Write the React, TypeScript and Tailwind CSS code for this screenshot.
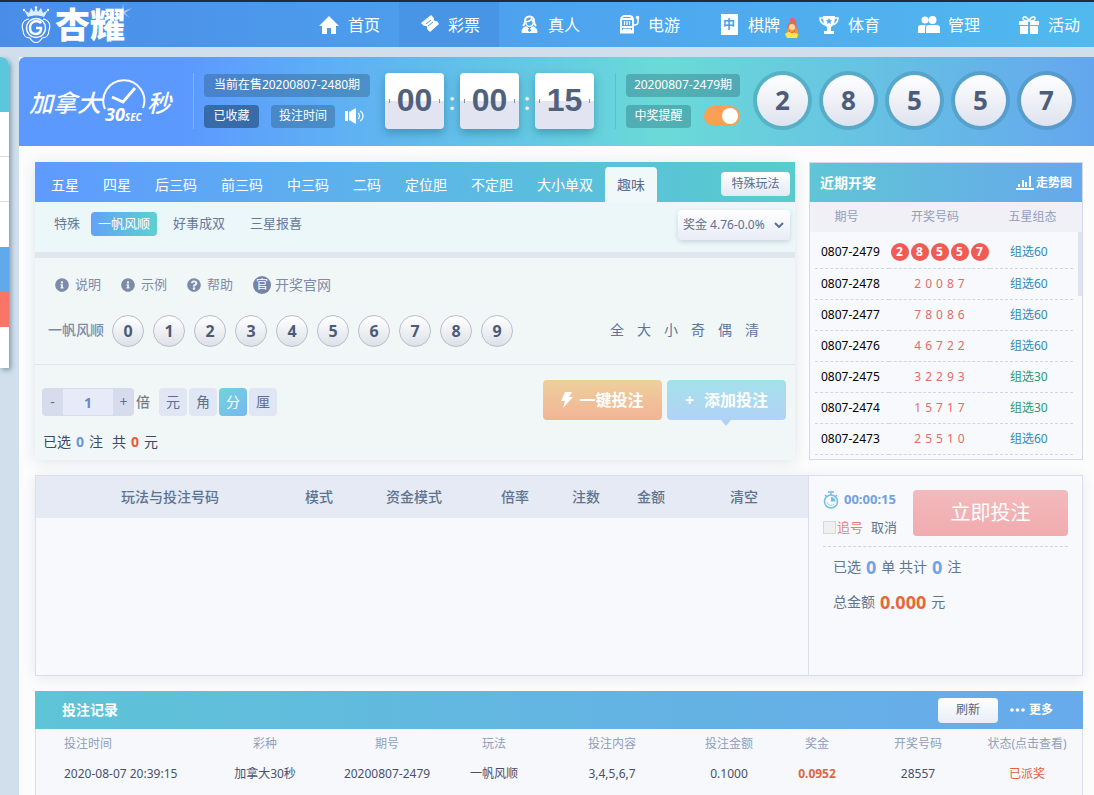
import React, { useState } from 'react';
import clsx from 'clsx';
import { FaInfoCircle, FaQuestionCircle } from 'react-icons/fa';

const CrownLogo = () => (
  <svg viewBox="0 0 30 38" className="h-[38px] w-[30px]" fill="none" stroke="white">
    <path d="M7 11 3 4l5 3 2-5 3 4 2-5 2 5 3-4 2 5 5-3-4 7c-5-2-11-2-16 0Z" fill="#dcefff" stroke="none" />
    <circle cx="3" cy="4" r="1.2" fill="white" stroke="none" />
    <circle cx="15" cy="1.5" r="1.2" fill="white" stroke="none" />
    <circle cx="27" cy="4" r="1.2" fill="white" stroke="none" />
    <path d="M8 13c-6 1-8 6-6 11 0 5 3 8 7 8 3 6 9 6 12 0 4 0 7-3 7-8 2-5 0-10-6-11" strokeWidth="1.1" />
    <circle cx="15" cy="22" r="9.5" strokeWidth="1.4" />
    <path d="M20 17c-5-4-11-1-11 5 0 7 9 8 11 2v-2h-5" strokeWidth="2.4" />
    <path d="M11 17c3-3 8-2 9 0" strokeWidth="2" />
  </svg>
);

const HomeIcon = () => (
  <svg viewBox="0 0 20 18" className="h-[18px] w-5" fill="white">
    <path d="m10 0 10 10h-3v8h-5v-6H8v6H3v-8H0L10 0Z" />
  </svg>
);

const TicketIcon = () => (
  <svg viewBox="0 0 19 19" className="size-[19px]" fill="white">
    <path d="m11 0 3 3c-1 2 1 4 3 3l2 3-9 8-3-3c1-2-1-4-3-3l-3-3L11 0Z" />
    <path d="m6 9 5-4M8 11l5-4" stroke="#4b97e4" strokeWidth="1" />
  </svg>
);

const DealerIcon = () => (
  <svg viewBox="0 0 18 20" className="h-[19px] w-[17px]" fill="none" stroke="white" strokeWidth="2">
    <path d="M9 1.5c-4 0-5 3-5 6 0 2-1 3-2 4M9 1.5c4 0 5 3 5 6 0 2 1 3 2 4" />
    <path d="M5 7c3 0 5-1 6-3 1 2 2 3 2 4 0 3-2 4-4 4S5 10 5 7Z" strokeWidth="1.5" />
    <path d="M1 18.5c0-4 2-6 5-6l3 3 3-3c3 0 5 2 5 6H1Z" fill="white" strokeWidth="1" />
    <path d="m9 14 2 2-2 2-2-2Z" fill="#4ca0ea" stroke="none" />
  </svg>
);

const SlotIcon = () => (
  <svg viewBox="0 0 21 19" className="h-[19px] w-[21px]" fill="none" stroke="white" strokeWidth="1.8">
    <path d="M2 5c0-3 2-4 4-4h4c3 0 4 1 4 4v11H2V5ZM1 17.5h14" />
    <path d="M2 4h12M3 12h10" strokeWidth="2" />
    <path d="M5.5 6v4M8 6v4M10.500 6v4" strokeWidth="1.2" />
    <path d="M4 14.500h8M15 10c3 0 4-1 4-3V3" strokeWidth="1.5" />
    <circle cx="18.500" cy="2.5" r="1.7" fill="white" stroke="none" />
  </svg>
);

const TileIcon = () => (
  <span className="flex h-[21px] w-[17px] items-center justify-center border-2 border-white bg-white text-xs font-bold leading-none text-[#4aa0e8]">
    中
  </span>
);

const TrophyIcon = () => (
  <svg viewBox="0 0 20 18" className="h-[18px] w-5" fill="none" stroke="white" strokeWidth="1.6">
    <path d="M5 2H1c0 4 2 6 6 7M15 2h4c0 4-2 6-6 7" />
    <path d="M4 0h12c0 6-1 9-4 11v4h3v3H5v-3h3v-4C5 9 4 6 4 0Z" fill="white" stroke="none" />
    <path d="m10 2 1 2 2 .3-1.500 1.500.5 2.200-2-1-2 1 .5-2.200L7 4.300 9 4Z" fill="#4faeee" stroke="none" />
  </svg>
);

const PeopleIcon = () => (
  <svg viewBox="0 0 22 18" className="h-[18px] w-[22px]" fill="white">
    <circle cx="7" cy="4" r="3.5" />
    <circle cx="14.5" cy="4" r="4" />
    <path d="M0 17v-5c0-2 1-3 3-3h5c-1 1-1 2-1 4v4H0ZM8 17v-5c0-2 1-3 3-3h7c3 0 4 1 4 3v5H8Z" />
  </svg>
);

const GiftIcon = () => (
  <svg viewBox="0 0 20 18" className="h-[18px] w-5" fill="white">
    <path d="M0 5h9v4H0zM11 5h9v4h-9zM1 10h8v8H1zM11 10h8v8h-8z" />
    <path d="M10 5C8 0 4 0 4 2.500S7 5 10 5Zm0 0c2-5 6-5 6-2.500S13 5 10 5Z" fill="none" stroke="white" strokeWidth="1.5" />
  </svg>
);

const MascotIcon = () => (
  <svg viewBox="0 0 16 21" className="h-[21px] w-4">
    <path d="M7 0c4 0 6 2 5 5l1 6H3c0-5 2-6 4-7-2 0-2-2 0-4Z" fill="#f1605c" />
    <path d="M4 10c0-3 8-4 9 1l2 7c-3 3-11 3-14 0l3-8Z" fill="#f3933f" />
    <circle cx="8" cy="9" r="3" fill="#ffdca0" />
    <path d="m1 16 5-3 8 3-1 4H3l-2-4Z" fill="#ffe64d" />
    <path d="m5 13 3 2 3-2" stroke="#ed5646" fill="none" />
  </svg>
);

const SpeakerIcon = () => (
  <svg viewBox="0 0 20 16" className="h-4 w-5" fill="none" stroke="white">
    <path d="M0 3h3v10H0zM4 4l7-4v16l-7-4Z" fill="white" stroke="none" />
    <path d="M13 5c2 1 2 5 0 6M15 3c4 2 4 8 0 10" strokeWidth="1.2" />
  </svg>
);

const BoltIcon = () => (
  <svg viewBox="0 0 12 16" className="h-4 w-3" fill="white">
    <path d="M4 0h7L8 5h4L2 16l2-7H0L4 0Z" />
  </svg>
);

const StopwatchIcon = () => (
  <svg viewBox="0 0 16 18" className="h-[18px] w-4 shrink-0" fill="none" stroke="#72bfe4">
    <path d="M5 1h6M8 1v3M2 4l2 2M14 4l-2 2" strokeWidth="1.5" />
    <circle cx="8" cy="10.5" r="6.5" strokeWidth="1.5" />
    <path d="M8 6v4.500h4.500A4.500 4.500 0 0 0 8 6Z" fill="#72bfe4" stroke="none" />
    <path d="M4 11a4 4 0 0 0 7 2" strokeWidth="0.6" />
  </svg>
);

const TrendIcon = () => (
  <svg viewBox="0 0 18 14" className="h-3.5 w-[18px]" fill="white">
    <path d="M0 12h18v2H0zM2 8h2v3H2zM6 4h2v7H6zM9 6h2v5H9zM13 0h2v11h-2z" />
  </svg>
);

const NAV = [
  { label: '首页', icon: <HomeIcon /> },
  { label: '彩票', icon: <TicketIcon />, active: true },
  { label: '真人', icon: <DealerIcon /> },
  { label: '电游', icon: <SlotIcon /> },
  { label: '棋牌', icon: <TileIcon />, hot: true },
  { label: '体育', icon: <TrophyIcon /> },
  { label: '管理', icon: <PeopleIcon /> },
  { label: '活动', icon: <GiftIcon /> },
];

const TABS = ['五星', '四星', '后三码', '前三码', '中三码', '二码', '定位胆', '不定胆', '大小单双', '趣味'];

const DRAWS = [
  ['0807-2479', '28557', '组选60'],
  ['0807-2478', '20087', '组选60'],
  ['0807-2477', '78086', '组选60'],
  ['0807-2476', '46722', '组选60'],
  ['0807-2475', '32293', '组选30'],
  ['0807-2474', '15717', '组选30'],
  ['0807-2473', '25510', '组选60'],
];

function TopNav() {
  return (
    <header className="flex h-[47px] shrink-0 overflow-hidden border-t-2 border-[#252a35] bg-linear-to-r from-[#4a8de8] via-[#4ea3ee] to-[#51b9ee]">
      <a href="#" className="flex w-[299px] shrink-0 items-center gap-1 pl-[21px] text-white">
        <CrownLogo />
        <span className="relative text-[35px] font-black leading-none">
          杏耀
          <svg viewBox="0 0 20 20" className="absolute -right-2 -top-1 size-5" fill="white" opacity="0.5">
            <path d="m10 0 1 8 8-3-7 5 5 5-6-4-1 9-1-9-6 4 5-5-7-5 8 3Z" />
          </svg>
        </span>
      </a>
      <nav className="flex">
        {NAV.map((item) => (
          <a
            key={item.label}
            href="#"
            className={clsx(
              'flex w-[100px] shrink-0 items-center whitespace-nowrap pl-[18px] text-base text-white',
              item.active && 'bg-[#4795e4]'
            )}
          >
            <span className="mr-[7px] flex w-6 shrink-0 justify-center">{item.icon}</span>
            {item.label}
            {item.hot && <span className="ml-1 mt-2 shrink-0"><MascotIcon /></span>}
          </a>
        ))}
      </nav>
    </header>
  );
}

function SideRail() {
  return (
    <aside className="mt-2.5 w-[9px] shrink-0 self-start overflow-hidden rounded-tr-lg bg-white shadow-[2px_2px_5px_#8298aa]">
      <div className="h-[55px] bg-[#5bc6dc]" />
      <div className="h-[45px] border-b border-[#d8dde5]" />
      <div className="h-[45px] border-b border-[#d8dde5]" />
      <div className="h-[45px]" />
      <div className="h-[45px] bg-[#5fa9ec]" />
      <div className="h-[35px] bg-[#fb7468]" />
      <div className="h-[41px]" />
    </aside>
  );
}

function LotteryLogo() {
  return (
    <div className="flex w-[164px] shrink-0 items-center pt-1 text-2xl font-medium italic leading-none text-white">
      加拿大
      <span className="relative mb-1 h-11 w-[46px] shrink-0">
        <svg viewBox="0 0 46 44" className="size-full" fill="none" stroke="white">
          <path d="M4 30A20.500 20.500 0 1 1 42 29" strokeWidth="2" />
          <path d="m11 18 11 5L34 9" strokeWidth="2.8" />
        </svg>
        <span className="absolute -bottom-0.5 left-1 whitespace-nowrap text-lg font-bold leading-4">
          30<span className="text-[10px]">SEC</span>
        </span>
      </span>
      秒
    </div>
  );
}

function FlipCard({ value }: { value: string }) {
  return (
    <div className="flex h-14 w-[59px] items-center justify-between rounded-sm bg-linear-to-b from-white from-50% to-[#e2e5f1] to-50% px-1 font-['Liberation_Sans',sans-serif] text-[32px] font-bold text-[#50617d] shadow-[0_4px_10px_rgba(30,100,120,0.45)]">
      <i className="h-1 w-px bg-[#8290a5]" />
      {value}
      <i className="h-1 w-px bg-[#8290a5]" />
    </div>
  );
}

function Hero() {
  const [notify, setNotify] = useState(true);
  return (
    <section className="flex h-[89px] shrink-0 items-center rounded-tl-md bg-linear-to-r from-[#5c99ff] from-15% via-[#6adad7] via-60% to-[#64a6ed] pb-0.5 pl-2.5 text-white">
      <LotteryLogo />
      <div className="h-14 w-px bg-white/25" />
      <div className="ml-2.5 flex w-[166px] shrink-0 flex-col gap-2 whitespace-nowrap text-xs">
        <div className="flex h-[23px] items-center justify-center rounded bg-[#24506f]/35">当前在售20200807-2480期</div>
        <div className="flex items-center">
          <button className="h-[23px] w-[55px] rounded bg-[#244e7d]/65">已收藏</button>
          <button className="ml-3 h-[23px] w-16 rounded bg-[#24506f]/35">投注时间</button>
          <button aria-label="声音" className="ml-2.5"><SpeakerIcon /></button>
        </div>
      </div>
      <div className="ml-[15px] flex shrink-0 items-center text-2xl font-medium">
        <FlipCard value="00" />
        <span className="w-4 text-center">:</span>
        <FlipCard value="00" />
        <span className="w-4 text-center">:</span>
        <FlipCard value="15" />
      </div>
      <div className="ml-[21px] h-14 w-px bg-[#4ba8ad]/40" />
      <div className="ml-2.5 flex w-[114px] shrink-0 flex-col gap-2 whitespace-nowrap text-xs">
        <div className="flex h-[23px] items-center justify-center rounded bg-[#24606f]/35">20200807-2479期</div>
        <label className="flex items-center justify-between">
          <span className="flex h-[23px] w-[65px] items-center justify-center rounded bg-[#24606f]/35">中奖提醒</span>
          <input
            type="checkbox"
            checked={notify}
            onChange={() => setNotify(!notify)}
            className="h-5 w-9 appearance-none rounded-full bg-[#b8c4cc] p-0.5 before:block before:size-4 before:rounded-full before:bg-white checked:bg-[#fba052] checked:before:ml-auto"
          />
        </label>
      </div>
      <div className="ml-[17px] flex shrink-0 gap-[15px]">
        {'28557'.split('').map((n, i) => (
          <span
            key={i}
            className="flex size-[51px] items-center justify-center rounded-full bg-linear-to-b from-white to-[#dfe3ef] text-[26px] font-bold text-[#4c5d7b] ring-4 ring-[#3c7b9b]/35"
          >
            {n}
          </span>
        ))}
      </div>
    </section>
  );
}

function PlayHeader() {
  return (
    <>
      <div className="flex h-10 items-end bg-linear-to-r from-[#5f9aff] via-[#5cb6e6] to-[#58cccc] pl-1 text-sm">
        {TABS.map((tab, i) => (
          <button
            key={tab}
            className={clsx(
              'h-[35px] whitespace-nowrap px-3',
              i === TABS.length - 1 ? 'rounded-t bg-[#f0f8fa] text-[#5c6c90]' : 'text-white'
            )}
          >
            {tab}
          </button>
        ))}
        <button className="mb-1.5 ml-auto mr-[5px] h-6 w-[69px] rounded bg-linear-to-b from-white to-[#e2eaf4] text-xs text-[#5d6f8a]">
          特殊玩法
        </button>
      </div>
      <div className="flex h-14 items-start border-b-6 border-[#dfe6ee] bg-[#ecf7f9] pl-[19px] pr-[5px] pt-2 text-[13px] text-[#66799a]">
        <span className="mt-1">特殊</span>
        <button className="ml-[11px] mt-0.5 h-6 w-[66px] rounded-sm bg-linear-to-r from-[#62a2f7] to-[#5dd0cf] text-white">一帆风顺</button>
        <button className="ml-4 mt-1">好事成双</button>
        <button className="ml-[25px] mt-1">三星报喜</button>
        <div className="relative ml-auto">
          <select
            aria-label="奖金"
            className="h-[30px] w-28 appearance-none rounded-sm bg-linear-to-b from-white to-[#e8ecf6] pl-[5px] text-xs text-[#5f7090] shadow-[0_2px_5px_#c8d4de]"
          >
            <option>奖金 4.76-0.0%</option>
          </select>
          <svg viewBox="0 0 10 6" className="pointer-events-none absolute right-1.5 top-3 h-1.5 w-2.5" fill="none" stroke="#5f7090" strokeWidth="2">
            <path d="m1 1 4 4 4-4" />
          </svg>
        </div>
      </div>
    </>
  );
}

function BetPanel() {
  const [times, setTimes] = useState(1);
  const [unit, setUnit] = useState('分');

  return (
    <section className="flex min-w-0 flex-1 flex-col bg-[#f1f7f7] shadow-[0_2px_14px_#dfe6e8]">
      <PlayHeader />
      <div className="flex h-[54px] items-center gap-5 pl-5 text-[13px] text-[#7d8bab]">
        <a href="#" className="flex items-center gap-1.5"><FaInfoCircle className="size-3.5" />说明</a>
        <a href="#" className="flex items-center gap-1.5"><FaInfoCircle className="size-3.5" />示例</a>
        <a href="#" className="flex items-center gap-1.5"><FaQuestionCircle className="size-3.5" />帮助</a>
        <a href="#" className="flex items-center gap-1 text-sm">
          <span className="flex size-[18px] items-center justify-center rounded-full bg-[#7484a8] text-xs text-white">官</span>
          开奖官网
        </a>
      </div>
      <div className="flex h-[53px] items-start border-b border-[#dde6ea] pl-[13px] pr-9 pt-[3px]">
        <span className="mr-2 mt-[5px] text-sm font-medium text-[#7d8bab]">一帆风顺</span>
        <div className="flex gap-[9px]">
          {[0, 1, 2, 3, 4, 5, 6, 7, 8, 9].map((n) => (
            <button
              key={n}
              className="size-8 rounded-full border border-[#b9bdcf] bg-linear-to-b from-white to-[#dde1e7] text-base font-bold text-[#4b5b78]"
            >
              {n}
            </button>
          ))}
        </div>
        <div className="ml-auto mt-[5px] flex gap-[13px] text-sm text-[#5c75a0]">
          {['全', '大', '小', '奇', '偶', '清'].map((t) => (
            <button key={t}>{t}</button>
          ))}
        </div>
      </div>
      <div className="flex items-start pl-[7px] pr-[9px] pt-[15px] text-sm">
        <div className="mt-2 flex items-center text-[#5d6f93]">
          <button className="h-7 w-[21px] rounded-l-sm bg-[#d7dcec]" onClick={() => setTimes(Math.max(1, times - 1))}>-</button>
          <input
            aria-label="倍数"
            value={times}
            onChange={(e) => setTimes(Number(e.target.value) || 1)}
            className="h-7 w-[50px] border-y border-[#d7dcec] bg-[#e6ebf7] text-center font-bold text-[#6488d0]"
          />
          <button className="h-7 w-[21px] rounded-r-sm bg-[#d7dcec]" onClick={() => setTimes(times + 1)}>+</button>
          <span className="ml-0.5 mr-[9px] font-medium text-[#777f88]">倍</span>
          <div className="flex gap-0.5">
            {['元', '角', '分', '厘'].map((u) => (
              <button
                key={u}
                onClick={() => setUnit(u)}
                className={clsx(
                  'size-7 rounded',
                  u === unit ? 'bg-linear-to-br from-[#70d4db] to-[#78b7f2] text-white' : 'bg-[#e0e6f3]'
                )}
              >
                {u}
              </button>
            ))}
          </div>
        </div>
        <div className="ml-auto flex gap-[5px] text-base font-bold text-white">
          <button className="flex h-10 w-[119px] items-center justify-center gap-1.5 rounded bg-linear-to-b from-[#efcf9c] to-[#f1b496]">
            <BoltIcon />
            一键投注
          </button>
          <button className="relative flex h-10 w-[119px] items-center justify-center gap-2.5 rounded bg-linear-to-b from-[#a4e1ea] to-[#b1d2f6]">
            <span>+</span>
            添加投注
            <i className="absolute left-[54px] top-full border-x-5 border-t-6 border-x-transparent border-t-[#b1d2f6]" />
          </button>
        </div>
      </div>
      <p className="mt-3 flex items-center gap-[5px] pb-2 pl-2 text-sm text-[#3c4967]">
        已选 <b className="text-[#6b94d8]">0</b> 注 <span className="ml-1">共</span> <b className="text-[#ea5b34]">0</b> 元
      </p>
    </section>
  );
}

function RecentDraws() {
  return (
    <section className="flex w-[274px] shrink-0 flex-col border border-[#d3d9ea] bg-[#f8f9fc]">
      <div className="flex h-[39px] items-center justify-between bg-linear-to-r from-[#60c5d4] to-[#66a8ec] px-2.5 text-sm font-bold text-white">
        近期开奖
        <a href="#" className="flex items-center gap-0.5 text-xs"><TrendIcon />走势图</a>
      </div>
      <div className="relative text-xs">
        <table className="w-full table-fixed text-center">
          <thead className="bg-[#f0f0f6] text-[#909fc0]">
            <tr className="h-[30px]">
              <th className="w-[73px] font-normal">期号</th>
              <th className="w-[104px] font-normal">开奖号码</th>
              <th className="pr-1 font-normal">五星组态</th>
            </tr>
          </thead>
        </table>
        <div className="pl-[5px] pr-[9px] pt-[5px]">
          <table className="w-full table-fixed">
            <tbody>
              {DRAWS.map(([issue, code, group], i) => (
                <tr key={issue} className="h-[31px] border-b border-dashed border-[#d5d6e5]">
                  <td className="w-[74px] pl-1.5 text-black">{issue}</td>
                  <td className="w-[101px]">
                    <div className={clsx('flex justify-center', i === 0 ? 'gap-0.5' : 'gap-1')}>
                      {code.split('').map((n, j) => (
                        <span
                          key={j}
                          className={
                            i === 0
                              ? 'flex size-[18px] items-center justify-center rounded-full bg-[#f05b55] font-bold text-white'
                              : 'text-[#e56b68]'
                          }
                        >
                          {n}
                        </span>
                      ))}
                    </div>
                  </td>
                  <td className={clsx('pl-5', group === '组选60' ? 'text-[#328caf]' : 'text-[#2b9a74]')}>{group}</td>
                </tr>
              ))}
            </tbody>
          </table>
        </div>
        <div className="absolute right-0 top-[30px] h-16 w-1 bg-[#dfe3ef]" />
      </div>
    </section>
  );
}

function BetSlip() {
  return (
    <section className="mt-[15px] flex h-[201px] border border-[#d9dfec] bg-[#f7f9fc] shadow-[0_2px_12px_#e7e8ed]">
      <div className="min-w-0 flex-1">
        <table className="w-full table-fixed text-left text-sm text-[#60748f]">
          <thead className="bg-[#e5eaf4]">
            <tr className="h-[42px]">
              <th className="w-[269px] pl-[85px] font-medium">玩法与投注号码</th>
              <th className="w-[81px] font-medium">模式</th>
              <th className="w-[115px] font-medium">资金模式</th>
              <th className="w-[71px] font-medium">倍率</th>
              <th className="w-[65px] font-medium">注数</th>
              <th className="w-[93px] font-medium">金额</th>
              <th className="w-[78px] font-medium">清空</th>
            </tr>
          </thead>
        </table>
      </div>
      <div className="w-[274px] shrink-0 border-l border-[#d9dfec] px-3.5 pt-3.5 text-[13px] text-[#60748f]">
        <div className="flex h-[57px] justify-between border-b border-dashed border-[#d0d5e0]">
          <div className="flex flex-col gap-2">
            <div className="flex items-center gap-[5px] font-bold text-[#71a2de]"><StopwatchIcon />00:00:15</div>
            <div className="flex items-center">
              <label className="flex items-center text-[#e77d7b]">
                <input type="checkbox" className="mr-px size-[13px] appearance-none border border-[#d5d9dc] bg-[#eef1f0]" />
                追号
              </label>
              <button className="ml-2">取消</button>
            </div>
          </div>
          <button className="h-[46px] w-[155px] rounded bg-linear-to-b from-[#f3babd] to-[#f1abae] text-xl text-white">立即投注</button>
        </div>
        <p className="mt-1.5 flex items-center gap-[5px] pl-2.5 text-sm">
          已选 <b className="text-lg text-[#74a1e8]">0</b> 单 共计 <b className="text-lg text-[#74a1e8]">0</b> 注
        </p>
        <p className="mt-[7px] flex items-center gap-[5px] pl-2.5 text-sm">
          总金额 <b className="text-lg text-[#e76736]">0.000</b> 元
        </p>
      </div>
    </section>
  );
}

function BetHistory() {
  return (
    <section className="mt-[15px] flex-1 border-x border-[#d8dfef] bg-[#f7f8fb]">
      <div className="-mx-px flex h-[38px] items-center bg-linear-to-r from-[#5ec4d7] via-[#63b5e2] to-[#68aaeb] pl-[27px] pr-[30px] text-sm font-bold text-white">
        投注记录
        <button className="ml-auto h-[25px] w-[60px] rounded bg-linear-to-b from-white to-[#e8edf7] text-xs font-normal text-[#54657d]">刷新</button>
        <a href="#" className="ml-3 flex items-center gap-1 text-xs">
          <svg viewBox="0 0 15 4" className="h-1 w-[15px]" fill="white">
            <circle cx="2" cy="2" r="1.8" />
            <circle cx="7.5" cy="2" r="1.8" />
            <circle cx="13" cy="2" r="1.8" />
          </svg>
          更多
        </a>
      </div>
      <table className="w-full table-fixed text-center text-xs text-[#48506c]">
        <thead className="text-[#919fbe]">
          <tr className="h-[30px]">
            <th className="w-[172px] pl-7 text-left font-normal">投注时间</th>
            <th className="w-[114px] font-normal">彩种</th>
            <th className="w-[130px] font-normal">期号</th>
            <th className="w-[84px] font-normal">玩法</th>
            <th className="w-[152px] font-normal">投注内容</th>
            <th className="w-[82px] font-normal">投注金额</th>
            <th className="w-[94px] font-normal">奖金</th>
            <th className="w-[108px] font-normal">开奖号码</th>
            <th className="w-[110px] font-normal">状态(点击查看)</th>
          </tr>
        </thead>
        <tbody>
          <tr className="h-[30px]">
            <td className="pl-7 text-left">2020-08-07 20:39:15</td>
            <td>加拿大30秒</td>
            <td>20200807-2479</td>
            <td>一帆风顺</td>
            <td>3,4,5,6,7</td>
            <td>0.1000</td>
            <td className="font-bold text-[#e16342]">0.0952</td>
            <td>28557</td>
            <td><a href="#" className="text-[#e16342]">已派奖</a></td>
          </tr>
        </tbody>
      </table>
    </section>
  );
}

export default function App() {
  return (
    <div className="flex min-h-screen flex-col bg-[#d0dfeb] font-['Noto_Sans','Noto_Sans_CJK_SC',sans-serif]">
      <TopNav />
      <div className="flex flex-1 gap-2.5 overflow-hidden">
        <SideRail />
        <main className="mt-2.5 flex min-w-0 flex-1 flex-col bg-[#fcfcfd]">
          <Hero />
          <div className="flex flex-1 flex-col pl-4 pr-[11px] pt-4">
            <div className="flex gap-3.5">
              <BetPanel />
              <RecentDraws />
            </div>
            <BetSlip />
            <BetHistory />
          </div>
        </main>
      </div>
    </div>
  );
}
